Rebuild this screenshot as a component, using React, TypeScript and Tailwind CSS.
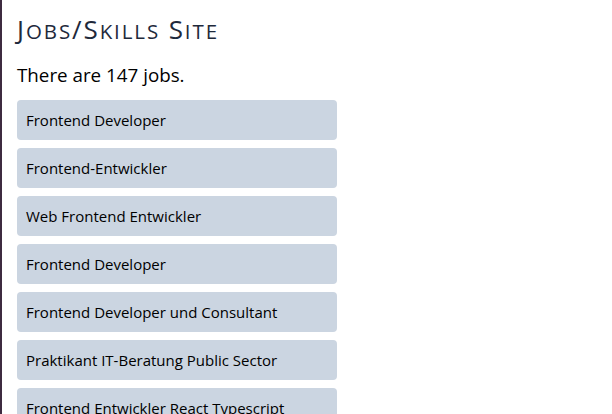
import React from "react";

const jobs = [
  "Frontend Developer",
  "Frontend-Entwickler",
  "Web Frontend Entwickler",
  "Frontend Developer",
  "Frontend Developer und Consultant",
  "Praktikant IT-Beratung Public Sector",
  "Frontend Entwickler React Typescript",
  "Frontend Developer",
];

export default function App() {
  return (
    <div
      className="min-h-screen border-l-2 border-[#3d2b40] bg-white pl-[15px] pt-[12px]"
      style={{ fontFamily: '"Open Sans", "Noto Sans", sans-serif' }}
    >
      <h1 className="h-[34px] text-[26px] leading-[34px] tracking-[1.9px] text-[#1e293b]">
        J<span className="text-[20.5px] leading-none uppercase">obs</span>/S
        <span className="text-[20.5px] leading-none uppercase">kills</span> S
        <span className="text-[20.5px] leading-none uppercase">ite</span>
      </h1>
      <p className="mt-[16px] text-[18.8px] leading-[26px] text-black">There are 147 jobs.</p>
      <div className="mt-[12px] flex flex-col gap-[8px]">
        {jobs.map((j, i) => (
          <div
            key={i}
            className="flex h-[40px] w-[320px] items-center rounded-[4px] bg-[#cbd5e1] pl-[9px] text-[15px] text-black"
          >
            {j}
          </div>
        ))}
      </div>
    </div>
  );
}
